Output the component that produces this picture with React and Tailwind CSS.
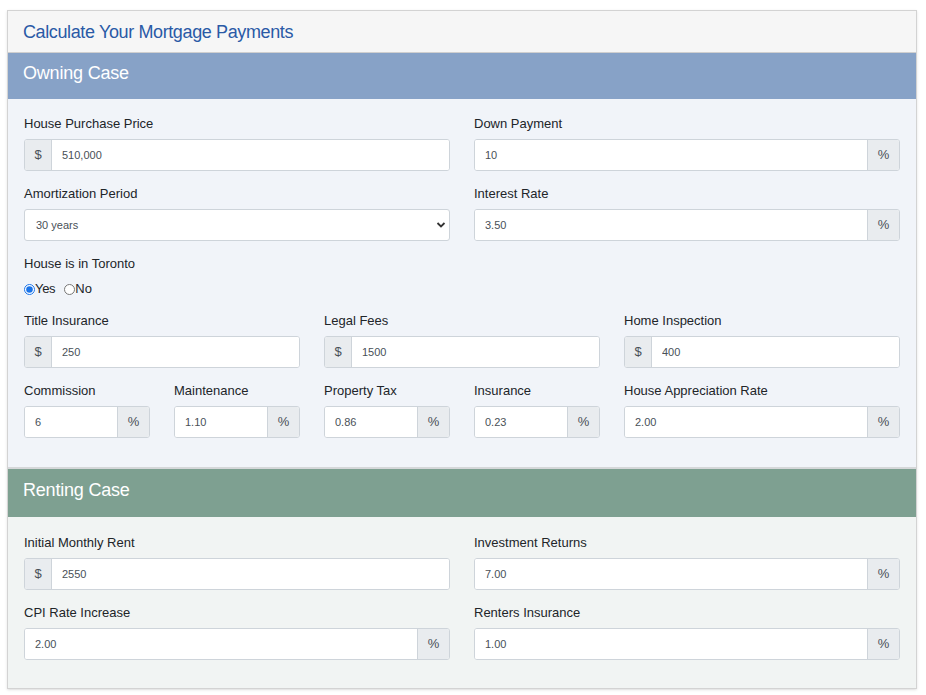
import { useState } from 'react';

const font = { fontFamily: '"Liberation Sans", Arial, sans-serif' };

// one labelled input with an optional "$" before or "%" after
const Field = ({ label, value, prefix, suffix, span = 'col-span-6' }) => (
  <div className={`${span} mb-[13px]`}>
    <label className="block text-[13px] leading-[20px] text-[#212529] mb-[5px]">{label}</label>
    <div className="flex h-[32px] rounded-[3px] border border-[#ced4da] bg-white overflow-hidden">
      {prefix && (
        <span className="w-[27px] shrink-0 flex items-center justify-center bg-[#e9ecef] border-r border-[#ced4da] text-[13px] text-[#495057]">
          {prefix}
        </span>
      )}
      <input
        className="min-w-0 flex-1 px-[10px] text-[11px] text-[#495057] outline-none bg-white"
        defaultValue={value}
      />
      {suffix && (
        <span className="w-[32px] shrink-0 flex items-center justify-center bg-[#e9ecef] border-l border-[#ced4da] text-[13px] text-[#495057]">
          {suffix}
        </span>
      )}
    </div>
  </div>
);

const App = () => {
  const [toronto, setToronto] = useState('yes');

  return (
    <div className="bg-white w-[926px] h-[695px] pt-[10px] pl-[7px]" style={font}>
      <div className="w-[910px] border border-[#d3d3d3] shadow-sm">
        <div className="h-[42px] bg-[#f6f6f6] border-b border-[#cfcfcf] flex items-center px-[15px]">
          <h1 className="text-[18px] text-[#2a5aa6] tracking-[-0.38px] pt-[1px]">Calculate Your Mortgage Payments</h1>
        </div>

        {/* owning */}
        <div className="h-[46px] bg-[#87a2c7] flex items-center px-[15px] pb-[5px]">
          <h2 className="text-[18px] text-white tracking-[-0.2px]">Owning Case</h2>
        </div>
        <div className="bg-[#f1f4f9] px-[16px] pt-[15px] pb-[16px]">
          <div className="grid grid-cols-12 gap-x-6">
            <Field label="House Purchase Price" value="510,000" prefix="$" />
            <Field label="Down Payment" value="10" suffix="%" />
            <div className="col-span-6 mb-[13px]">
              <label className="block text-[13px] leading-[20px] text-[#212529] mb-[5px]">Amortization Period</label>
              <div className="relative h-[32px] rounded-[3px] border border-[#ced4da] bg-white flex items-center px-[11px]">
                <span className="text-[11px] text-[#495057]">30 years</span>
                <svg className="absolute right-[3px] top-[10px]" width="10" height="10" viewBox="0 0 10 10">
                  <path d="M1.5 3 L5 6.5 L8.5 3" fill="none" stroke="#333" strokeWidth="1.8" />
                </svg>
              </div>
            </div>
            <Field label="Interest Rate" value="3.50" suffix="%" />
            <div className="col-span-12 mb-[12px]">
              <label className="block text-[13px] leading-[20px] text-[#212529] mb-[5px]">House is in Toronto</label>
              <div className="flex items-center h-[20px] text-[13px] text-[#212529]">
                <label className="flex items-center">
                  <input
                    type="radio"
                    className="w-[11px] h-[11px] m-0 accent-[#1a73e8]"
                    checked={toronto === 'yes'}
                    onChange={() => setToronto('yes')}
                  />
                  <span className="tracking-[-0.3px]">Yes</span>
                </label>
                <label className="flex items-center ml-[9px]">
                  <input
                    type="radio"
                    className="w-[11px] h-[11px] m-0 accent-[#1a73e8]"
                    checked={toronto === 'no'}
                    onChange={() => setToronto('no')}
                  />
                  <span>No</span>
                </label>
              </div>
            </div>
            <Field label="Title Insurance" value="250" prefix="$" span="col-span-4" />
            <Field label="Legal Fees" value="1500" prefix="$" span="col-span-4" />
            <Field label="Home Inspection" value="400" prefix="$" span="col-span-4" />
            <Field label="Commission" value="6" suffix="%" span="col-span-2" />
            <Field label="Maintenance" value="1.10" suffix="%" span="col-span-2" />
            <Field label="Property Tax" value="0.86" suffix="%" span="col-span-2" />
            <Field label="Insurance" value="0.23" suffix="%" span="col-span-2" />
            <Field label="House Appreciation Rate" value="2.00" suffix="%" span="col-span-4" />
          </div>
        </div>

        {/* renting */}
        <div className="border-t-2 border-[#d5d7d9] h-[50px] bg-[#7ea091] flex items-center px-[15px] pb-[5px]">
          <h2 className="text-[18px] text-white tracking-[-0.2px]">Renting Case</h2>
        </div>
        <div className="bg-[#f1f4f3] px-[16px] pt-[16px] pb-[15px]">
          <div className="grid grid-cols-12 gap-x-6">
            <Field label="Initial Monthly Rent" value="2550" prefix="$" />
            <Field label="Investment Returns" value="7.00" suffix="%" />
            <Field label="CPI Rate Increase" value="2.00" suffix="%" />
            <Field label="Renters Insurance" value="1.00" suffix="%" />
          </div>
        </div>
      </div>
    </div>
  );
};

export default App;
